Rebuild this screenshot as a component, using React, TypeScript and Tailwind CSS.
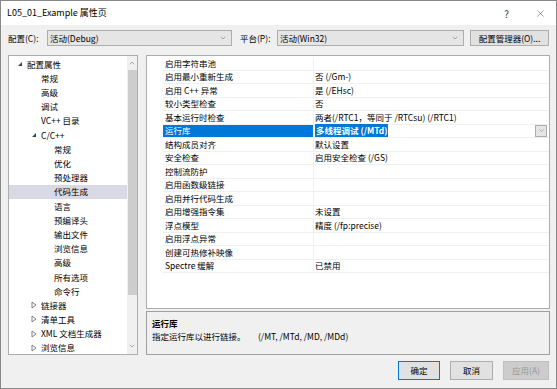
import { ChevronDown, ChevronUp, X } from 'lucide-react';

const font = { fontFamily: '"Noto Sans CJK SC", "Noto Sans", sans-serif' };

type TreeItem = { label: string; level: number; arrow?: 'open' | 'closed'; selected?: boolean };

const tree: TreeItem[] = [
	{ label: '配置属性', level: 0, arrow: 'open' },
	{ label: '常规', level: 1 },
	{ label: '高级', level: 1 },
	{ label: '调试', level: 1 },
	{ label: 'VC++ 目录', level: 1 },
	{ label: 'C/C++', level: 1, arrow: 'open' },
	{ label: '常规', level: 2 },
	{ label: '优化', level: 2 },
	{ label: '预处理器', level: 2 },
	{ label: '代码生成', level: 2, selected: true },
	{ label: '语言', level: 2 },
	{ label: '预编译头', level: 2 },
	{ label: '输出文件', level: 2 },
	{ label: '浏览信息', level: 2 },
	{ label: '高级', level: 2 },
	{ label: '所有选项', level: 2 },
	{ label: '命令行', level: 2 },
	{ label: '链接器', level: 1, arrow: 'closed' },
	{ label: '清单工具', level: 1, arrow: 'closed' },
	{ label: 'XML 文档生成器', level: 1, arrow: 'closed' },
	{ label: '浏览信息', level: 1, arrow: 'closed' }
];

const props: [string, string][] = [
	['启用字符串池', ''],
	['启用最小重新生成', '否 (/Gm-)'],
	['启用 C++ 异常', '是 (/EHsc)'],
	['较小类型检查', '否'],
	['基本运行时检查', '两者(/RTC1，等同于 /RTCsu) (/RTC1)'],
	['运行库', '多线程调试 (/MTd)'],
	['结构成员对齐', '默认设置'],
	['安全检查', '启用安全检查 (/GS)'],
	['控制流防护', ''],
	['启用函数级链接', ''],
	['启用并行代码生成', ''],
	['启用增强指令集', '未设置'],
	['浮点模型', '精度 (/fp:precise)'],
	['启用浮点异常', ''],
	['创建可热修补映像', ''],
	['Spectre 缓解', '已禁用']
];

const Arrow = ({ kind }: { kind?: 'open' | 'closed' }) => {
	if (kind === 'open')
		return (
			<svg width="6" height="6" viewBox="0 0 6 6" className="shrink-0">
				<path d="M5 1 L5 5 L1 5 Z" fill="#404040" />
			</svg>
		);
	if (kind === 'closed')
		return (
			<svg width="6" height="8" viewBox="0 0 6 8" className="shrink-0">
				<path d="M1 1 L5 4 L1 7 Z" fill="none" stroke="#808080" strokeWidth="1" />
			</svg>
		);
	return <span className="w-[6px] shrink-0" />;
};

const Combo = ({ text, className }: { text: string; className: string }) => (
	<div
		className={`flex h-[16px] items-center justify-between border border-[#adadad] bg-[#e5e5e5] pl-[2px] pr-[4px] ${className}`}
	>
		<span>{text}</span>
		<ChevronDown size={8} strokeWidth={1.5} className="text-[#606060]" />
	</div>
);

export default function App() {
	return (
		<div
			className="flex h-[389px] w-[557px] flex-col border border-[#888888] bg-[#f0f0f0] text-[8.5px] text-black"
			style={font}
		>
			<div className="flex h-[24px] items-center bg-white pl-[6px] pr-[10px] text-[9px]">
				<span className="flex-1">L05_01_Example 属性页</span>
				<span className="mr-[26px] text-[10px] text-[#333]">?</span>
				<X size={11} strokeWidth={1} className="text-[#333]" />
			</div>

			<div className="mt-[5px] flex items-center pl-[7px]">
				<span className="w-[39px]">配置(C):</span>
				<Combo text="活动(Debug)" className="w-[185px]" />
				<span className="ml-[8px] w-[37px]">平台(P):</span>
				<Combo text="活动(Win32)" className="w-[187px]" />
				<button className="ml-[6px] flex h-[16px] w-[79px] items-center justify-center border border-[#adadad] bg-[#e1e1e1]">
					配置管理器(O)...
				</button>
			</div>

			<div className="mt-[9px] flex pl-[7px]">
				<div className="flex h-[300px] w-[130px] border border-[#abadb3] bg-white">
					<div className="flex-1 pt-[1px]">
						{tree.map((t, i) => (
							<div
								key={i}
								className={`flex h-[14.2px] items-center ${t.selected ? 'bg-[#d9d9e5]' : ''}`}
								style={{ paddingLeft: 8 + t.level * 14 - (t.arrow && t.level ? 0 : 0) }}
							>
								{t.level < 2 || t.arrow ? <Arrow kind={t.arrow} /> : <span className="w-[6px]" />}
								<span className={t.level === 2 ? 'ml-[17px]' : 'ml-[4px]'} style={t.level === 2 ? { marginLeft: 3 } : undefined}>
									{t.label}
								</span>
							</div>
						))}
					</div>
					<div className="flex w-[10px] flex-col items-center bg-[#f0f0f0]">
						<ChevronUp size={8} strokeWidth={1.5} className="mt-[3px] text-[#606060]" />
						<div className="mt-[3px] h-[225px] w-[9px] bg-[#cdcdcd]" />
						<div className="flex-1" />
						<ChevronDown size={8} strokeWidth={1.5} className="mb-[4px] text-[#606060]" />
					</div>
				</div>

				<div className="ml-[8px] flex w-[404px] flex-col">
					<div className="h-[254px] border border-[#abadb3] bg-white pl-[16px] pt-[1px]">
						{props.map(([k, v], i) => {
							const sel = k === '运行库';
							return (
								<div key={i} className="flex h-[13.5px] items-center border-b border-[#f0f0f0]">
									<div
										className={`flex h-full w-[151px] items-center border-r border-[#f0f0f0] pl-[2px] ${
											sel ? 'bg-[#0078d7] text-white' : ''
										}`}
									>
										{k}
									</div>
									<div className="flex h-full flex-1 items-center pl-[1px]">
										{sel ? (
											<>
												<span className="bg-[#0078d7] px-[1px] font-bold text-white">{v}</span>
												<span className="flex-1" />
												<span className="mr-[2px] flex h-[12px] w-[12px] items-center justify-center border border-[#adadad] bg-[#e5e5e5]">
													<ChevronDown size={7} strokeWidth={1.5} className="text-[#606060]" />
												</span>
											</>
										) : (
											<span>{v}</span>
										)}
									</div>
								</div>
							);
						})}
					</div>
					<div className="mt-[2px] h-[44px] border border-[#a0a0a0] bg-[#f0f0f0] px-[5px] pt-[5px]">
						<div className="font-bold leading-[13px]">运行库</div>
						<div className="flex leading-[13px]">
							<span className="w-[106px]">指定运行库以进行链接。</span>
							<span>(/MT, /MTd, /MD, /MDd)</span>
						</div>
					</div>
				</div>
			</div>

			<div className="mt-[6px] flex justify-end gap-[10px] pr-[7px]">
				<button className="h-[19px] w-[42px] border border-[#0078d7] bg-[#e1e1e1]">确定</button>
				<button className="h-[19px] w-[43px] border border-[#adadad] bg-[#e1e1e1]">取消</button>
				<button className="h-[19px] w-[46px] border border-[#bfbfbf] bg-[#cccccc] text-[#9a9a9a]">应用(A)</button>
			</div>
		</div>
	);
}
